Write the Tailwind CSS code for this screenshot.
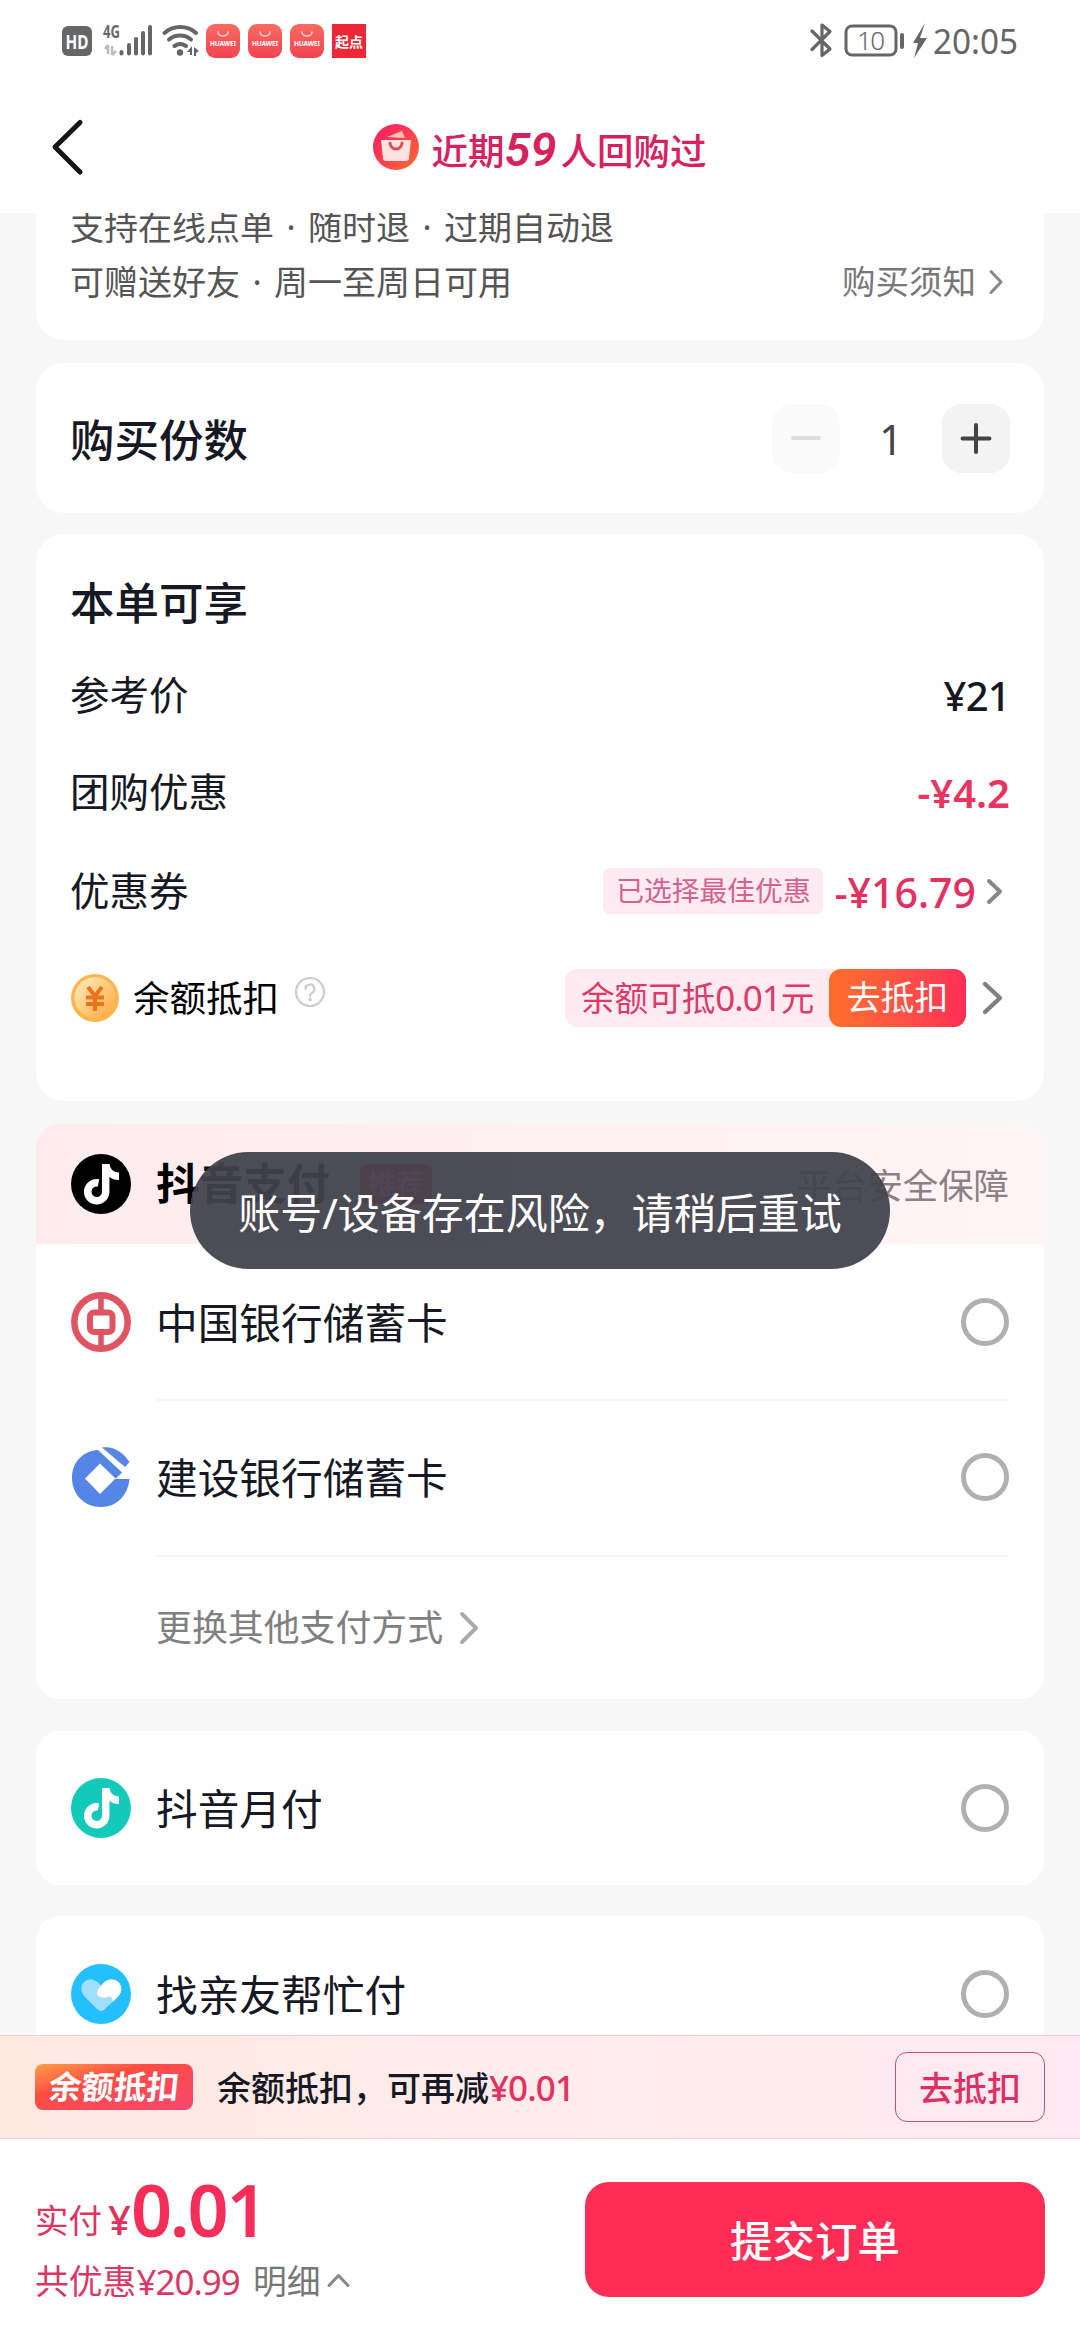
<!DOCTYPE html>
<html lang="zh-CN">
<head>
<meta charset="utf-8">
<title>提交订单</title>
<script src="https://cdn.jsdelivr.net/npm/@tailwindcss/browser@4"></script>
</head>
<body class="relative flex h-[2340px] w-[1080px] flex-col overflow-hidden bg-[#f7f7f7] font-['Noto_Sans','Noto_Sans_CJK_SC',sans-serif] leading-none text-[#161823] whitespace-nowrap">

<!-- Status bar -->
<div class="flex h-[82px] shrink-0 items-center justify-between bg-white pr-[62px] pl-[62px] text-[#666]">
  <svg class="h-[82px] w-[310px]" viewBox="62 0 310 82" fill="#666">
    <defs>
      <linearGradient id="hw" x1="0" y1="0" x2="0" y2="1"><stop offset="0" stop-color="#fa6a62"/><stop offset="1" stop-color="#f04450"/></linearGradient>
    </defs>
    <rect x="62" y="26" width="30" height="30" rx="6"/>
    <text x="77" y="49" text-anchor="middle" font-size="20" font-weight="700" fill="#fff" font-family="Noto Sans" textLength="23" lengthAdjust="spacingAndGlyphs">HD</text>
    <text x="103" y="38" font-size="18" font-weight="700" font-family="Noto Sans" textLength="17" lengthAdjust="spacingAndGlyphs">4G</text>
    <path d="M108 45v9M105 49l3-4M112 46v9M112 55l4-4" stroke="#bbb" stroke-width="2.500" fill="none"/>
    <rect x="119.500" y="50" width="4" height="5.500" rx="2"/><rect x="127" y="43" width="4" height="12.500" rx="2"/><rect x="134" y="37" width="4" height="18.500" rx="2"/><rect x="141" y="31" width="4" height="24.500" rx="2"/><rect x="148" y="25" width="4" height="30.500" rx="2"/>
    <g fill="none" stroke="#666" stroke-width="4" stroke-linecap="round"><path d="M164.500 33a24 24 0 0 1 31.500 0"/><path d="M169 39.500a17.500 17.500 0 0 1 22 0"/><path d="M174.500 46a10 10 0 0 1 11.500 0"/></g>
    <circle cx="180" cy="52.500" r="3.200"/>
    <path d="M187 52l5-6v9h-2v-3zM199 51l-5-4v9h2v-3z"/>
    <g>
      <rect x="206" y="24" width="34" height="34" rx="9" fill="url(#hw)"/><rect x="248" y="24" width="34" height="34" rx="9" fill="url(#hw)"/><rect x="290" y="24" width="34" height="34" rx="9" fill="url(#hw)"/>
      <g fill="none" stroke="#ffd0cc" stroke-width="1.600" stroke-linecap="round"><path d="M218 32a5 4 0 0 0 10 0M260 32a5 4 0 0 0 10 0M302 32a5 4 0 0 0 10 0"/></g>
      <g fill="#fff" font-size="6.500" font-weight="700" font-family="Noto Sans" text-anchor="middle">
        <text x="223" y="46" textLength="26">HUAWEI</text><text x="265" y="46" textLength="26">HUAWEI</text><text x="307" y="46" textLength="26">HUAWEI</text>
      </g>
      <rect x="332" y="24" width="34" height="34" fill="#ee2737"/>
      <text x="349" y="46.500" text-anchor="middle" font-size="14" font-weight="700" fill="#fff" font-family="Noto Sans CJK SC">起点</text>
    </g>
  </svg>
  <svg class="h-[82px] w-[210px]" viewBox="808 0 210 82" fill="none" stroke="#666">
    <path d="M812 31l18 18-8 6.500V25l8 6.500-18 18" stroke-width="3.200" stroke-linejoin="round" stroke-linecap="round"/>
    <rect x="846" y="26" width="50" height="29" rx="6" stroke-width="3"/>
    <rect x="900" y="33" width="4" height="16" rx="2" fill="#666" stroke="none"/>
    <path d="M925 23l-12 20h5l-4 15 13-20h-7z" fill="#666" stroke="none"/>
    <g fill="#666" stroke="none" font-family="Noto Sans"><text x="857" y="50" font-size="26" textLength="28" font-weight="300">10</text><text x="933" y="54" font-size="35" textLength="85" lengthAdjust="spacingAndGlyphs">20:05</text></g>
  </svg>
</div>

<!-- Title bar -->
<header class="relative flex h-[131px] shrink-0 items-start justify-center bg-white pt-[38px]">
  <svg class="absolute top-[36px] left-[48px] h-[58px] w-[38px]" viewBox="0 0 38 58" fill="none" stroke="#161616" stroke-width="5" stroke-linecap="round" stroke-linejoin="round"><path d="M32 4.500L7 29l25 25"/></svg>
  <div class="flex h-[60px] items-center text-[36.500px] font-medium text-[#d8205f]">
    <svg class="mt-[-6px] mr-[12px] h-[46px] w-[46px]" viewBox="0 0 46 46">
      <defs><linearGradient id="bag" x1="0" y1="0" x2="1" y2="1"><stop offset=".25" stop-color="#fa2a5c"/><stop offset="1" stop-color="#ff6d30"/></linearGradient></defs>
      <circle cx="23" cy="23" r="23" fill="url(#bag)"/>
      <path d="M14 13l15-6 3 7z" fill="#ffc0b8"/>
      <path d="M8 16h30l-2 18q0 3-3 3H13q-3 0-3-3z" fill="#ffe3de"/>
      <path d="M17 19a6 6 0 0 0 12 0" fill="none" stroke="#e8485a" stroke-width="3" stroke-linecap="round"/>
    </svg>
    <span class="mt-[3px]">近期</span><span class="mr-[4px] -mt-[2px] font-['Roboto'] text-[47px] font-semibold italic">59</span><span class="mt-[3px]">人回购过</span>
  </div>
</header>

<!-- Scrolling content -->
<main class="flex h-[1822px] shrink-0 flex-col overflow-hidden px-[36px]">

  <section class="h-[127px] shrink-0 rounded-b-[28px] bg-white px-[34px] text-[34px] text-[#555]">
    <div class="flex h-[28px] items-center"><span>支持在线点单</span><span class="w-[34px] text-center">·</span><span>随时退</span><span class="w-[34px] text-center">·</span><span>过期自动退</span></div>
    <div class="mt-[26px] flex h-[30px] items-center"><span>可赠送好友</span><span class="w-[34px] text-center">·</span><span>周一至周日可用</span>
      <span class="ml-auto text-[33.500px] text-[#777]">购买须知</span>
      <svg class="mr-[6px] ml-[12px] h-[26px] w-[16px]" viewBox="0 0 16 26" fill="none" stroke="#888" stroke-width="3" stroke-linecap="round" stroke-linejoin="round"><path d="M3 2.500l10 10.500-10 10.500"/></svg>
    </div>
  </section>

  <section class="mt-[23px] flex h-[150px] shrink-0 items-center rounded-[28px] bg-white px-[34px]">
    <h2 class="mt-[5px] text-[44.500px] font-medium">购买份数</h2>
    <div class="ml-auto flex items-center">
      <div class="flex h-[69px] w-[68px] items-center justify-center rounded-[20px] bg-[#fafafa]"><div class="h-[4px] w-[30px] rounded-full bg-[#dcdcdc]"></div></div>
      <span class="w-[102px] pt-[2px] text-center text-[41px] text-[#444]">1</span>
      <svg class="h-[69px] w-[68px] rounded-[20px] bg-[#f3f3f3]" viewBox="0 0 68 69" stroke="#444" stroke-width="4" stroke-linecap="round"><path d="M20.500 34.500h27M34 21v27"/></svg>
    </div>
  </section>

  <section class="mt-[21px] h-[567px] shrink-0 rounded-[28px] bg-white px-[34px] pt-[23px] text-[39.500px]">
    <div class="flex h-[92px] items-center text-[44.500px]"><h2 class="font-medium">本单可享</h2></div>
    <div class="flex h-[93px] items-center justify-between"><span>参考价</span><span class="text-[40px] font-medium tracking-[-0.7px]">¥21</span></div>
    <div class="flex h-[100px] items-center justify-between pt-[2px]"><span>团购优惠</span><span class="text-[40px] font-semibold text-[#ea3460]">-¥4.2</span></div>
    <div class="flex h-[98px] items-center"><span class="pt-[2px]">优惠券</span>
      <span class="ml-auto flex h-[46px] w-[220px] items-center justify-center rounded-[6px] bg-[#feeaf1] text-[27.800px] text-[#d5628c]">已选择最佳优惠</span>
      <span class="ml-[11px] pt-[2px] text-[41px] font-medium text-[#e4305f]">-¥16.79</span>
      <svg class="mr-[7px] ml-[10px] h-[27px] w-[17px]" viewBox="0 0 17 27" fill="none" stroke="#888" stroke-width="4" stroke-linecap="round" stroke-linejoin="round"><path d="M3 3l11 10.500L3 24"/></svg>
    </div>
    <div class="flex h-[116px] items-center text-[36.500px] text-black">
      <svg class="mr-[13px] h-[50px] w-[50px]" viewBox="0 0 50 50">
        <defs><linearGradient id="coin" x1="0" y1="0" x2="1" y2="1"><stop offset="0" stop-color="#fff0c0"/><stop offset="1" stop-color="#ffa63a"/></linearGradient></defs>
        <circle cx="25" cy="25" r="24" fill="#fbb64e"/><circle cx="25" cy="24.500" r="20.500" fill="url(#coin)"/>
        <path d="M18 14l7 9 7-9M16 24.500h18M16 31h18M25 23v15" fill="none" stroke="#e8741e" stroke-width="4"/>
      </svg>
      <span>余额抵扣</span>
      <svg class="-mt-[12px] ml-[15px] h-[32px] w-[32px]" viewBox="0 0 32 32" fill="none" stroke="#ccc" stroke-width="2.200" stroke-linecap="round"><circle cx="16" cy="16" r="14"/><path d="M11.500 13a4.500 4.500 0 1 1 6.500 4q-2 1-2 3"/><circle cx="16" cy="23.500" r=".7"/></svg>
      <div class="ml-auto flex h-[58px] items-center rounded-[12px] bg-[#feebf1]">
        <span class="w-[264px] pl-[16px] text-[33.600px] text-[#dc3a68]">余额可抵<span class="text-[35px] tracking-[-1px]">0.01</span>元</span>
        <span class="flex h-[58px] w-[137px] items-center justify-center rounded-[12px] bg-gradient-to-r from-[#ff6f28] to-[#ff2c55] text-[33.800px] text-white">去抵扣</span>
      </div>
      <svg class="mr-[6px] ml-[15px] h-[36px] w-[23px]" viewBox="0 0 23 36" fill="none" stroke="#808080" stroke-width="4.400" stroke-linecap="round" stroke-linejoin="round"><path d="M4 4l15 14L4 32"/></svg>
    </div>
  </section>

  <section class="mt-[23px] h-[575px] shrink-0 overflow-hidden rounded-[24px] bg-white text-[41.700px]">
    <div class="flex h-[120px] items-center bg-gradient-to-r from-[#ffebee] to-[#fff5f6] px-[35px]">
      <svg class="mr-[25px] h-[60px] w-[60px]" viewBox="0 0 60 60"><circle cx="30" cy="30" r="30"/><g id="note"><path fill="none" stroke="#fff" stroke-width="7.500" d="M27.500 29A9 9 0 1 0 34.700 37.500V10"/><path fill="#fff" d="M31 10h7.500c.5 5 4 8 9.500 8.500v7.500c-4 0-7-1-9.500-3z"/></g></svg>
      <span class="text-[43.500px] font-bold text-black">抖音支付</span>
      <span class="ml-[30px] flex h-[40px] w-[72px] items-center justify-center rounded-[8px] bg-[#fe2c55] text-[28px] font-bold text-[#ff9db0]">推荐</span>
      <span class="ml-auto pt-[3px] text-[35.400px] text-[#8c8082]">平台安全保障</span>
    </div>
    <div class="flex h-[155px] items-center px-[35px]">
      <svg class="mr-[25px] h-[60px] w-[60px]" viewBox="0 0 60 60" fill="none" stroke="#df5460"><circle cx="30" cy="30" r="26.700" stroke-width="6.500"/><rect x="19" y="20.500" width="22.500" height="19.500" rx="4" stroke-width="6"/><path d="M30 4v16M30 41v16" stroke-width="5.500"/></svg>
      <span class="pt-[2px]">中国银行储蓄卡</span>
      <span class="ml-auto h-[48px] w-[48px] rounded-full border-[5px] border-[#b0b0b0]"></span>
    </div>
    <div class="flex h-[156px] items-center px-[35px]">
      <svg class="mr-[25px] h-[60px] w-[60px]" viewBox="0 0 60 60"><path fill="#5585e6" d="M27 3L51 25.500 46 30.500 43.500 32H58.500C57 48 46 60 30 60 13 60 1 47 1 31 1 15 12 4 27 3z"/><path fill="#5585e6" d="M31 .5C42-1.500 52 5 58.500 15l-4.500 5z"/><path fill="#fff" d="M29 16.500l15.500 15-15.500 15.500-15-15.500z"/></svg>
      <span class="flex h-full flex-1 items-center border-t-2 border-[#f5f5f5]">建设银行储蓄卡
        <span class="-mt-[2px] ml-auto h-[48px] w-[48px] rounded-full border-[5px] border-[#b0b0b0]"></span>
      </span>
    </div>
    <div class="mr-[35px] ml-[120px] flex h-[144px] items-center border-t-2 border-[#f5f5f5] text-[35.900px] text-[#808080]">
      <span>更换其他支付方式</span>
      <svg class="ml-[15px] h-[36px] w-[23px]" viewBox="0 0 23 36" fill="none" stroke="#aaa" stroke-width="4" stroke-linecap="round" stroke-linejoin="round"><path d="M4 4l14 14L4 32"/></svg>
    </div>
  </section>

  <section class="mt-[32px] flex h-[154px] shrink-0 items-center rounded-[24px] bg-white px-[35px] text-[41.700px]">
    <svg class="mr-[25px] h-[60px] w-[60px]" viewBox="0 0 60 60"><circle cx="30" cy="30" r="30" fill="#12c9ba"/><use href="#note"/></svg>
    <span class="pt-[2px]">抖音月付</span>
    <span class="ml-auto h-[48px] w-[48px] rounded-full border-[5px] border-[#b0b0b0]"></span>
  </section>

  <section class="mt-[31px] flex h-[156px] shrink-0 items-center rounded-[24px] bg-white px-[35px] text-[41.700px]">
    <svg class="mr-[25px] h-[60px] w-[60px]" viewBox="0 0 60 60"><circle cx="30" cy="30" r="30" fill="#24bffd"/><path fill="#9fdefd" d="M30 47q-2 0-4-2L13 32c-5-6-3-16 6-16.500 5 0 8 2.500 11 6 3-3.500 6-6 11-6 9 .5 12 10.500 6 17L34 45q-2 2-4 2z"/><path fill="#fff" d="M30 22c3-4 6-6.500 11-6.500 9 .5 12 10 7 16l-6.500 7c1-3-1-6-4-6-6 3-11.500 0-11.500-4q1-4 4-6.500z"/></svg>
    <span class="pt-[2px]">找亲友帮忙付</span>
    <span class="ml-auto h-[48px] w-[48px] rounded-full border-[5px] border-[#b0b0b0]"></span>
  </section>
</main>

<!-- Balance promotion -->
<div class="flex h-[104px] shrink-0 items-center border-t border-b border-[#f3cdd5] bg-gradient-to-r from-[#ffe8e0] via-[#feeced] to-[#fde9f1] px-[35px]">
  <span class="flex h-[46px] w-[158px] items-center justify-center rounded-[8px] bg-gradient-to-br from-[#ff9c4a] via-[#fc4d42] via-35% to-[#f9466f] text-[32.500px] font-bold text-white"><span class="-skew-x-6">余额抵扣</span></span>
  <span class="ml-[24px] pt-[1px] text-[34px] font-medium">余额抵扣，可再减</span><span class="pt-[1px] text-[35px] font-medium tracking-[-0.9px] text-[#e4315f]">¥0.01</span>
  <span class="ml-auto flex h-[70px] w-[150px] items-center justify-center rounded-[12px] border border-[#b9557c] pt-[2px] text-[34px] font-medium text-[#df2f62]">去抵扣</span>
</div>

<!-- Payment footer -->
<footer class="flex h-[201px] shrink-0 justify-between bg-white px-[35px] pt-[43px]">
  <div class="-mt-[3px] flex flex-col">
    <div class="flex h-[66px] items-baseline text-[#e2315f]"><span class="relative -top-[4px] text-[33.500px]">实付</span><span class="relative -top-[2px] ml-[6px] text-[40px] font-medium">¥</span><span class="text-[72px] font-semibold leading-[60px] tracking-[-2.2px] text-[#f42e58]">0.01</span></div>
    <div class="flex h-[60px] items-center pt-[13px] text-[33.800px] text-[#da3864]"><span>共优惠</span><span class="text-[35px] tracking-[-1px]">¥20.99</span><span class="ml-[13px] text-[#777]">明细</span>
      <svg class="-mt-[4px] ml-[6px] h-[16px] w-[25px]" viewBox="0 0 25 16" fill="none" stroke="#888" stroke-width="3" stroke-linecap="round" stroke-linejoin="round"><path d="M3 13.500l9.500-10 9.500 10"/></svg>
    </div>
  </div>
  <button class="h-[115px] w-[460px] rounded-[24px] bg-[#ff2c55] pt-[3px] text-[42.500px] font-medium text-white">提交订单</button>
</footer>

<!-- Toast -->
<div class="absolute top-[1152px] left-[190px] flex h-[117px] w-[700px] items-center justify-center rounded-full bg-[#41424b]/94 pt-[5px] text-[42px] text-white">账号/设备存在风险，请稍后重试</div>
</body>
</html>
